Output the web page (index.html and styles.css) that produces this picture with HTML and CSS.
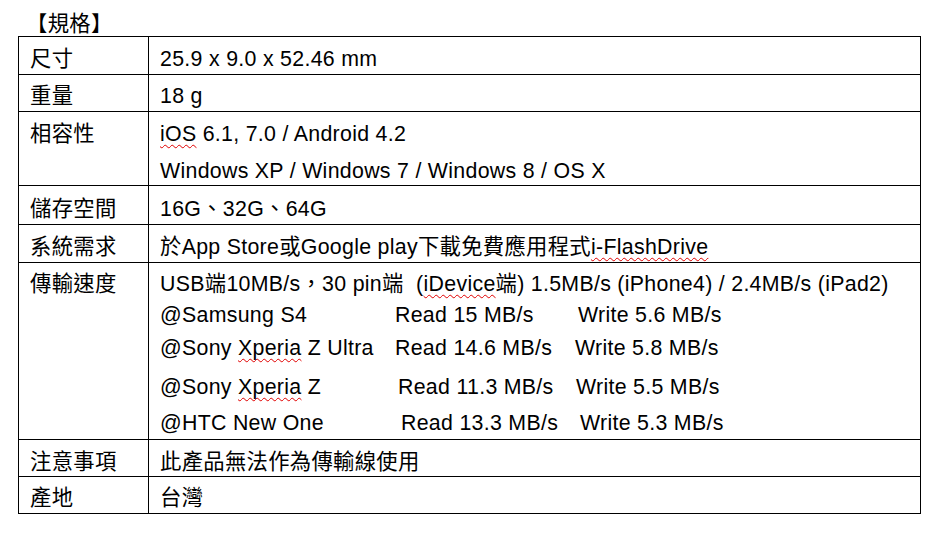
FILE: index.html
```html
<!DOCTYPE html>
<html lang="zh-Hant">
<head>
<meta charset="utf-8">
<title>規格</title>
<link rel="stylesheet" href="styles.css">
</head>
<body>
<div class="page">
  <div class="title">【規格】</div>
  <div class="spec">
    <div class="cell key p6">尺寸</div>
    <div class="cell val p6">25.9 x 9.0 x 52.46 mm</div>

    <div class="cell key p5">重量</div>
    <div class="cell val p5">18 g</div>

    <div class="cell key p4 tall">相容性</div>
    <div class="cell val p4 tall">
      <div><span class="sp">iOS</span> 6.1, 7.0 / Android 4.2</div>
      <div>Windows XP / Windows 7 / Windows 8 / OS X</div>
    </div>

    <div class="cell key p7">儲存空間</div>
    <div class="cell val p7">16G、32G、64G</div>

    <div class="cell key p6">系統需求</div>
    <div class="cell val p6">於App Store或Google play下載免費應用程式<span class="sp">i-FlashDrive</span></div>

    <div class="cell key p5">傳輸速度</div>
    <div class="cell val p5">
      <div>USB端10MB/s，30 pin端&nbsp; (<span class="sp">iDevice</span>端) 1.5MB/s (iPhone4) / 2.4MB/s (iPad2)</div>
      <div class="speed sa lift1"><span>@Samsung S4</span><span>Read 15 MB/s</span><span>Write 5.6 MB/s</span></div>
      <div class="speed sb"><span>@Sony <span class="sp">Xperia</span> Z Ultra</span><span>Read 14.6 MB/s</span><span>Write 5.8 MB/s</span></div>
      <div class="speed sc gap7"><span>@Sony <span class="sp">Xperia</span> Z</span><span>Read 11.3 MB/s</span><span>Write 5.5 MB/s</span></div>
      <div class="speed sd gap4"><span>@HTC New One</span><span>Read 13.3 MB/s</span><span>Write 5.3 MB/s</span></div>
    </div>

    <div class="cell key p6">注意事項</div>
    <div class="cell val p6">此產品無法作為傳輸線使用</div>

    <div class="cell key p5">產地</div>
    <div class="cell val p5">台灣</div>
  </div>
</div>
</body>
</html>
```

FILE: styles.css
```css
html, body {
  margin: 0;
  padding: 0;
  background: #fff;
}

body {
  font-family: "Liberation Sans", "Noto Sans CJK TC", sans-serif;
  font-size: 21.33px;
  letter-spacing: 0.3px;
  color: #000;
}

.page {
  padding-left: 18px;
}

.title {
  height: 30px;
  padding: 6px 0 0 8px;
  line-height: 36px;
  box-sizing: content-box;
}

.spec {
  display: grid;
  grid-template-columns: 130px 772px;
  grid-template-rows: 38px 37px 74px 39px 38px 177px 37px 37px;
  width: max-content;
  border-top: 1px solid #000;
  border-left: 1px solid #000;
}

.cell {
  box-sizing: border-box;
  border-right: 1px solid #000;
  border-bottom: 1px solid #000;
  padding: 5px 0 0 11px;
  line-height: 32px;
  white-space: nowrap;
}

.p2 { padding-top: 2px; }
.p3 { padding-top: 3px; }
.p4 { padding-top: 4px; }
.p5 { padding-top: 5px; }
.p6 { padding-top: 6px; }
.p7 { padding-top: 7px; }

.tall { line-height: 37px; }

.sp {
  text-decoration: underline wavy #e00000;
  text-decoration-thickness: 1px;
  text-underline-offset: 3px;
  text-decoration-skip-ink: none;
}

.speed {
  display: grid;
}
.sa { grid-template-columns: 235px 183px auto; }
.sb { grid-template-columns: 235px 180px auto; }
.sc { grid-template-columns: 238px 178px auto; }
.sd { grid-template-columns: 241px 179px auto; }

.lift1 { margin-top: -1px; margin-bottom: 1px; }
.gap7 { margin-top: 7px; }
.gap4 { margin-top: 4px; }
```
